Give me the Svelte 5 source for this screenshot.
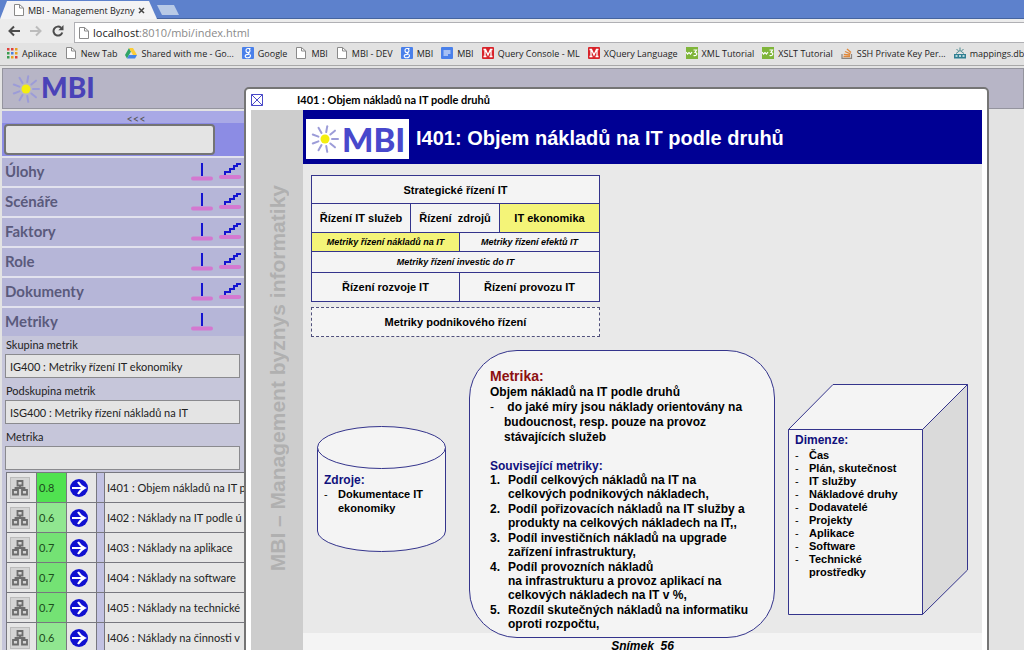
<script>
  const bookmarks = [
    { icon: 'apps', name: 'Aplikace' },
    { icon: 'page', name: 'New Tab' },
    { icon: 'drive', name: 'Shared with me - Go...' },
    { icon: 'google', name: 'Google' },
    { icon: 'page', name: 'MBI' },
    { icon: 'page', name: 'MBI - DEV' },
    { icon: 'google', name: 'MBI' },
    { icon: 'doc', name: 'MBI' },
    { icon: 'ml', name: 'Query Console - ML' },
    { icon: 'ml', name: 'XQuery Language' },
    { icon: 'w3', name: 'XML Tutorial' },
    { icon: 'w3', name: 'XSLT Tutorial' },
    { icon: 'stack', name: 'SSH Private Key Per...' },
    { icon: 'maps', name: 'mappings.db' },
  ];

  const menu = [
    { name: 'Úlohy', stairs: true },
    { name: 'Scénáře', stairs: true },
    { name: 'Faktory', stairs: true },
    { name: 'Role', stairs: true },
    { name: 'Dokumenty', stairs: true },
    { name: 'Metriky', stairs: false },
  ];

  const filters = $state([
    { id: 'group', label: 'Skupina metrik', value: 'IG400 : Metriky řízení IT ekonomiky' },
    { id: 'subgroup', label: 'Podskupina metrik', value: 'ISG400 : Metriky řízení nákladů na IT' },
    { id: 'metric', label: 'Metrika', value: '' },
  ]);

  const metrics = [
    { score: 0.8, name: 'I401 : Objem nákladů na IT p' },
    { score: 0.6, name: 'I402 : Náklady na IT podle ú' },
    { score: 0.7, name: 'I403 : Náklady na aplikace' },
    { score: 0.7, name: 'I404 : Náklady na software' },
    { score: 0.7, name: 'I405 : Náklady na technické' },
    { score: 0.6, name: 'I406 : Náklady na činnosti v' },
  ];

  const related = [
    'Podíl celkových nákladů na IT na\ncelkových podnikových nákladech,',
    'Podíl pořizovacích nákladů na IT služby a\nprodukty na celkových nákladech na IT,,',
    'Podíl investičních nákladů na upgrade\nzařízení infrastruktury,',
    'Podíl provozních nákladů\nna infrastrukturu a provoz aplikací na\ncelkových nákladech na IT v %,',
    'Rozdíl skutečných nákladů na informatiku\noproti rozpočtu,',
  ];

  const dimensions = [
    'Čas',
    'Plán, skutečnost',
    'IT služby',
    'Nákladové druhy',
    'Dodavatelé',
    'Projekty',
    'Aplikace',
    'Software',
    'Technické\nprostředky',
  ];

  const appColors = ['#e0403a', '#e0403a', '#e8a020', '#3a9c50', '#4a7fe0', '#e8a020', '#3a9c50', '#e8a020', '#e0403a'];
  const rays = [0, 40, 80, 120, 160, 200, 240, 280, 320];

  let search = $state('');
</script>

{#snippet pageIcon()}
  <svg width="12" height="12" viewBox="0 0 12 12" aria-hidden="true">
    <path d="M1.5.5h5l4 3.5v7.5h-9z" fill="#fff" stroke="#8a8a8a" />
    <path d="M6.5.5V4h4" fill="none" stroke="#8a8a8a" />
  </svg>
{/snippet}

{#snippet sun()}
  <svg class="sun" viewBox="0 0 30 32" aria-hidden="true">
    {#each rays as a}
      <path d="M22 16h6" stroke="#9c9cd8" stroke-width="2" stroke-linecap="round" transform={`rotate(${a} 15 16)`} />
    {/each}
    <circle cx="15" cy="16" r="4.5" fill="#f4ee10" />
  </svg>
{/snippet}

<div class="browser">
  <header class="chrome">
    <div class="tabs">
      <div class="tab">
        {@render pageIcon()}
        <span>MBI - Management Byzny</span>
        <button aria-label="Zavřít panel">
          <svg width="7" height="7" viewBox="0 0 7 7"><path d="M1 1l5 5M6 1l-5 5" stroke="#444" stroke-width="1.5" /></svg>
        </button>
      </div>
      <button class="newtab" aria-label="Nový panel"></button>
    </div>
    <div class="toolbar">
      <button aria-label="Zpět">
        <svg width="12" height="12" viewBox="0 0 12 12"><path d="M6 1.5L1.5 6 6 10.5M1.5 6H12" fill="none" stroke="#4c4c4c" stroke-width="2" /></svg>
      </button>
      <button aria-label="Vpřed">
        <svg width="12" height="12" viewBox="0 0 12 12"><path d="M6 1.5L10.5 6 6 10.5M10.5 6H0" fill="none" stroke="#bcbcbc" stroke-width="2" /></svg>
      </button>
      <button aria-label="Obnovit">
        <svg width="12" height="12" viewBox="0 0 12 12">
          <path d="M10.3 7.5A4.5 4.5 0 1 1 9 2.7" fill="none" stroke="#4c4c4c" stroke-width="2" />
          <path d="M11.5 0v5.2H6.3z" fill="#4c4c4c" />
        </svg>
      </button>
      <div class="address">
        {@render pageIcon()}
        <span><b>localhost</b>:8010/mbi/index.html</span>
      </div>
    </div>
    <nav class="bookmarks">
      {#each bookmarks as { icon, name }}
        <a href="#{icon}">
          {#if icon === 'page'}
            {@render pageIcon()}
          {:else}
            <svg width="12" height="12" viewBox="0 0 12 12" aria-hidden="true">
              {#if icon === 'apps'}
                {#each appColors as fill, i}
                  <rect x={(i % 3) * 4 + 1} y={Math.floor(i / 3) * 4 + 1} width="2.5" height="2.5" {fill} />
                {/each}
              {:else if icon === 'drive'}
                <path d="M4 1L0 8l2 3.5L6 4.5z" fill="#2fa566" />
                <path d="M4 1h4l4 7H8z" fill="#fbcd36" />
                <path d="M4 8h8l-2 3.5H2z" fill="#4384e8" />
              {:else if icon === 'google'}
                <rect width="12" height="12" rx="1" fill="#4a80ea" />
                <path d="M8.5 1.5H6a2 2 0 1 0 0 4c1.3 0 2-.8 2-2s-.6-1.5-1-2M6 5.5c-.8.7 2.5 1.5 2.5 3S7 10.8 5.6 10.8 3.2 10 3.2 9 4.5 7.4 6.8 7.4" fill="none" stroke="#fff" stroke-width="1.1" />
              {:else if icon === 'doc'}
                <rect width="12" height="12" rx="1" fill="#4a80ea" />
                <path d="M2.5 4h7M2.5 6h7M2.5 8h4.5" stroke="#fff" />
              {:else if icon === 'ml'}
                <rect width="12" height="12" rx="1" fill="#d8232a" />
                <path d="M1.5 9.5h3M3 9.5v-7M1.5 2.5h2L6 8l2.5-5.5h2M9 2.5v7M7.5 9.5h3" fill="none" stroke="#fff" stroke-width="1.3" />
              {:else if icon === 'w3'}
                <rect width="12" height="12" fill="#7fb53a" />
                <path d="M0 5l1.5 2L3 5.5 4.5 7 6 5M7.5 3h3L9 5.5c3 0 2 4-1.5 3" fill="none" stroke="#fff" stroke-width="1.2" />
              {:else if icon === 'stack'}
                <path d="M1 7v4.3h9.5V7" fill="none" stroke="#8a8580" stroke-width="1.2" />
                <path d="M2.5 9.5H9M2.8 7.4l6.2.6M4 4.5l5.5 2.3M6 2l4 3.6" stroke="#e0883a" stroke-width="1.3" />
              {:else}
                <path d="M0 11.5V7h12v4.5z" fill="#2f7f92" />
                <path d="M2 6.5l4-3 4 3M6 .5v3M2.5 2l2 2M9.5 2l-2 2" fill="none" stroke="#4d8a90" />
                <path d="M1.5 9h2M5 9h2M8.5 9h2" stroke="#e8f4f4" stroke-width="1.5" />
              {/if}
            </svg>
          {/if}
          <span>{name}</span>
        </a>
      {/each}
    </nav>
  </header>

  <div class="app">
    <div class="brand">{@render sun()}<span>MBI</span></div>

    <aside>
      <button class="collapse">&lt;&lt;&lt;</button>
      <div class="search">
        <input type="search" aria-label="Hledat" bind:value={search} />
      </div>
      <ul class="menu">
        {#each menu as { name, stairs }}
          <li>
            <a href="#{name}">{name}</a>
            <button aria-label="{name} - sbalit">
              <svg width="22" height="20" viewBox="0 0 22 20">
                <path d="M11 1v13" stroke="#1414d0" stroke-width="2" />
                <path d="M2 16.5h18" stroke="#d478d0" stroke-width="4" stroke-linecap="round" />
              </svg>
            </button>
            <button aria-label="{name} - rozbalit" class:hidden={!stairs}>
              <svg width="22" height="20" viewBox="0 0 22 20">
                <path d="M2 15h18" stroke="#d478d0" stroke-width="4" stroke-linecap="round" />
                <path d="M6 13V10h5V7h4V4h3V2h4" fill="none" stroke="#1414d0" stroke-width="2" />
              </svg>
            </button>
          </li>
        {/each}
      </ul>
      <form>
        {#each filters as f}
          <label for={f.id}>{f.label}</label>
          <input id={f.id} type="text" bind:value={f.value} />
        {/each}
      </form>
      <table>
        <tbody>
          {#each metrics as { score, name }}
            <tr>
              <td class="tree">
                <button aria-label="Strom">
                  <svg width="18" height="18" viewBox="0 0 18 18">
                    <path d="M6.5 2h5v4.5h-5zM2 11h5v4.5H2zM11 11h5v4.5h-5zM9 6.5V9M4.5 11V9h9v2" fill="none" stroke="#6c6c6c" stroke-width="1.8" />
                  </svg>
                </button>
              </td>
              <td class="score s{score * 10}">{score}</td>
              <td class="go">
                <button aria-label="Otevřít">
                  <svg width="18" height="18" viewBox="0 0 18 18">
                    <circle cx="9" cy="9" r="9" fill="#1010d0" />
                    <path d="M2 9h12M8 3q2.5 4 6.5 6-4 2-6.5 6" fill="none" stroke="#fff" stroke-width="2.2" />
                  </svg>
                </button>
              </td>
              <td class="gap"></td>
              <td class="name">{name}</td>
            </tr>
          {/each}
        </tbody>
      </table>
    </aside>

    <div class="dialog" role="dialog" aria-labelledby="dialog-title">
      <div class="titlebar">
        <button aria-label="Zavřít">
          <svg width="12" height="12" viewBox="0 0 12 12"><path d="M.5.5h11v11H.5zM.5.5l11 11M11.5.5l-11 11" fill="#fff" stroke="#4a4ac8" /></svg>
        </button>
        <h2 id="dialog-title">I401 : Objem nákladů na IT podle druhů</h2>
      </div>
      <div class="slide">
        <div class="strip"><span>MBI – Management byznys informatiky</span></div>
        <div class="content">
          <div class="banner">
            <div class="logo">{@render sun()}<span>MBI</span></div>
            <h1>I401: Objem nákladů na IT podle druhů</h1>
          </div>
          <div class="canvas">
            <div class="matrix">
              <div class="c4">Strategické řízení IT</div>
              <div>Řízení IT služeb</div>
              <div class="c2">Řízení&nbsp; zdrojů</div>
              <div class="on">IT ekonomika</div>
              <div class="c2 sub on">Metriky řízení nákladů na IT</div>
              <div class="c2 sub">Metriky řízení efektů IT</div>
              <div class="c4 sub">Metriky řízení investic do IT</div>
              <div class="c2">Řízení rozvoje IT</div>
              <div class="c2">Řízení provozu IT</div>
            </div>
            <div class="company">Metriky podnikového řízení</div>

            <div class="shapes">
              <section class="cylinder">
                <svg viewBox="0 0 129 126" preserveAspectRatio="none" aria-hidden="true">
                  <path d="M.5 21v84a64 20.5 0 0 0 128 0V21" fill="#f4f4f4" stroke="#34348c" />
                  <ellipse cx="64.5" cy="21.5" rx="64" ry="21" fill="#f4f4f4" stroke="#34348c" />
                </svg>
                <h3>Zdroje:</h3>
                <ul>
                  <li><i>-</i><span>{'Dokumentace IT\nekonomiky'}</span></li>
                </ul>
              </section>

              <section class="metric">
                <h2>Metrika:</h2>
                <p>Objem nákladů na IT podle druhů</p>
                <ul>
                  <li><i>-</i><span>{'\u00a0do jaké míry jsou náklady orientovány na\nbudoucnost, resp. pouze na provoz\nstávajících služeb'}</span></li>
                </ul>
                <h3>Související metriky:</h3>
                <ol>
                  {#each related as text, i}
                    <li><b>{i + 1}.</b><span>{text}</span></li>
                  {/each}
                </ol>
              </section>

              <section class="cube">
                <svg viewBox="0 0 180 231" preserveAspectRatio="none" aria-hidden="true">
                  <path d="M.5 45.5L45 .5h134.5l-45 45z" fill="#f4f4f4" stroke="#34348c" />
                  <path d="M134.5 45.5l45-45V186l-45 44.5z" fill="#dadada" stroke="#34348c" />
                  <path d="M.5 45.5h134v185H.5z" fill="#f4f4f4" stroke="#34348c" />
                </svg>
                <h3>Dimenze:</h3>
                <ul>
                  {#each dimensions as text}
                    <li><i>-</i><span>{text}</span></li>
                  {/each}
                </ul>
              </section>
            </div>
          </div>
          <footer>Snímek&nbsp; 56</footer>
        </div>
      </div>
    </div>
  </div>
</div>

<style>
  :global(body) {
    background: #e3e3e3;
  }
  .browser {
    height: 100vh;
    display: flex;
    flex-direction: column;
    overflow: hidden;
    color: #222;
    font-family: Lato, 'Liberation Sans', sans-serif;
    font-size: 11px;
  }
  .browser :is(h1, h2, h3, p, ul, ol) {
    margin: 0;
    padding: 0;
    list-style: none;
  }
  button {
    display: flex;
    align-items: center;
    justify-content: center;
    padding: 0;
    border: none;
    background: none;
  }
  input {
    box-sizing: border-box;
    font: inherit;
    color: inherit;
  }
  svg {
    display: block;
    flex: none;
  }
  a {
    color: inherit;
    text-decoration: none;
  }

  /* browser window */
  .chrome {
    flex: none;
    font-family: 'Open Sans', 'Noto Sans', sans-serif;
    font-size: 9px;
    background: #e2e2e2;
    border-bottom: 1px solid #a8a8a8;
  }
  .tabs {
    display: flex;
    align-items: end;
    height: 18px;
    background: #5d81cc;
    border-bottom: 1px solid #45649f;
  }
  .tab {
    display: flex;
    align-items: center;
    box-sizing: border-box;
    width: 157px;
    height: 18px;
    padding: 0 12px 0 13px;
    gap: 3px;
    margin-bottom: -1px;
    background: #f3f3f5;
    clip-path: polygon(0 100%, 7px 0, 149px 0, 100% 100%);
  }
  .tab span {
    flex: 1;
    white-space: nowrap;
  }
  .newtab {
    width: 22px;
    height: 10px;
    margin-bottom: 3px;
    background: #b8cae6;
    clip-path: polygon(0 0, 17px 0, 100% 100%, 5px 100%);
  }
  .toolbar {
    display: flex;
    align-items: center;
    height: 24px;
    padding-left: 8px;
    gap: 10px;
    background: #ececec;
  }
  .address {
    flex: 1;
    display: flex;
    align-items: center;
    align-self: end;
    height: 19px;
    padding-left: 3px;
    gap: 3px;
    border: 1px solid #b0b0b4;
    border-right: none;
    background: #fff;
    color: #8a8a8a;
    font-size: 11px;
  }
  .address b {
    font-weight: 400;
    color: #222;
  }
  .bookmarks {
    display: flex;
    align-items: center;
    height: 20px;
    padding: 0 0 2px 6px;
    gap: 8px;
    overflow: hidden;
  }
  .bookmarks a {
    display: flex;
    align-items: center;
    flex: none;
    gap: 4px;
    white-space: nowrap;
  }

  /* page */
  .app {
    flex: 1;
    position: relative;
    padding: 2px 0 0 2px;
    min-height: 0;
  }
  .brand {
    display: flex;
    align-items: center;
    height: 39px;
    padding-left: 8px;
    border: 1px solid #94949e;
    background: #b7b5c6;
    color: #4a42b8;
    font-size: 28px;
    font-weight: 900;
    line-height: 34px;
  }
  .brand span {
    padding-bottom: 3px;
  }
  .sun {
    width: 30px;
    height: 32px;
  }
  aside {
    width: 244px;
    margin-top: 2px;
    background: #c6c6da;
  }
  .collapse {
    width: 100%;
    height: 12px;
    padding: 3px 0 0 24px;
    background: #a9a9e6;
    color: #555;
    font: inherit;
  }
  .search {
    height: 33px;
    padding: 1px 2px;
    box-sizing: border-box;
    background: #8c8ce4;
  }
  .search input {
    display: block;
    width: 211px;
    height: 31px;
    border: 2px solid #747474;
    border-radius: 4px;
    background: #e4e4e4;
    appearance: none;
  }
  .menu li {
    display: flex;
    align-items: center;
    height: 28px;
    padding: 0 5px 0 3px;
    gap: 6px;
    border-top: 2px solid #e2e2ee;
    background: #b6b6d8;
  }
  .menu a {
    flex: 1;
    color: #5a5a7c;
    font-size: 15px;
    font-weight: 700;
    line-height: 20px;
    padding-bottom: 2px;
  }
  .hidden {
    visibility: hidden;
  }
  form {
    padding: 0 6px 0 3px;
  }
  form label {
    display: block;
    line-height: 18px;
    padding: 0 1px;
  }
  form input {
    display: block;
    width: 100%;
    height: 24px;
    margin-bottom: 4px;
    padding: 0 4px;
    border: 1px solid #8a8a8e;
    border-radius: 0;
    background: #e4e4e4;
  }
  table {
    width: 240px;
    margin: -2px 0 0 4px;
    table-layout: fixed;
    border-collapse: collapse;
  }
  td {
    height: 29px;
    padding: 0;
    border: 1px solid #77777f;
    background: #e6e6e6;
  }
  .tree,
  .score,
  .go {
    width: 29px;
  }
  .tree button {
    width: 20px;
    height: 22px;
    margin-left: 3px;
    background: #d4d4d4;
    border: 1px solid #bcbcbc;
  }
  .go button {
    margin-left: 3px;
  }
  .score {
    padding-left: 2px;
    width: 27px;
    color: #1c4c1c;
  }
  .s8 {
    background: #50e250;
  }
  .s7 {
    background: #74e274;
  }
  .s6 {
    background: #90e690;
  }
  .gap {
    width: 7px;
    background: #c2c2e2;
  }
  .name {
    padding-left: 2px;
    white-space: nowrap;
  }

  /* dialog */
  .dialog {
    position: absolute;
    top: 21px;
    left: 244px;
    right: 35px;
    bottom: -40px;
    padding: 0 5px;
    border: 2px solid #757575;
    border-radius: 5px;
    background: #fff;
    color: #000;
    overflow: hidden;
  }
  .titlebar {
    display: flex;
    align-items: center;
    height: 21px;
    gap: 34px;
  }
  .titlebar h2 {
    font-size: 11px;
    font-weight: 700;
  }
  .slide {
    display: flex;
    font-family: 'Liberation Sans', Arial, sans-serif;
    font-size: 12px;
    font-weight: 700;
  }
  .strip {
    flex: none;
    width: 52px;
    box-sizing: border-box;
    padding: 75px 0 0 15px;
    background: #cdcdcd;
    color: #b0b0b0;
    font-size: 21px;
    line-height: 24px;
  }
  .strip span {
    display: block;
    writing-mode: vertical-rl;
    transform: rotate(180deg);
    white-space: nowrap;
  }
  .content {
    flex: 1;
    background: #f4f4f4;
  }
  .banner {
    display: flex;
    align-items: center;
    height: 54px;
    padding-left: 3px;
    gap: 7px;
    background: #000094;
    color: #fff;
  }
  .banner h1 {
    font-size: 20px;
    line-height: 24px;
    padding-top: 2px;
  }
  .logo {
    display: flex;
    align-items: center;
    box-sizing: border-box;
    width: 103px;
    height: 40px;
    margin-top: 4px;
    padding-left: 4px;
    gap: 2px;
    background: #fff;
    color: #4848cc;
    font: 900 33px Lato, sans-serif;
  }
  .canvas {
    display: flow-root;
    padding: 11px 8px 0;
    background: #e9e9e9;
  }
  .matrix,
  .company {
    font-size: 11px;
  }
  .matrix {
    display: grid;
    grid-template-columns: 99fr 49fr 40fr 100fr;
    grid-template-rows: 28px 29px 19px 21px 29px;
    width: 288px;
    border: solid #34348c;
    border-width: 1px 0 0 1px;
  }
  .matrix div {
    display: flex;
    align-items: center;
    justify-content: center;
    border: solid #34348c;
    border-width: 0 1px 1px 0;
    background: #f4f4f4;
    white-space: nowrap;
  }
  .matrix .c2 {
    grid-column: span 2;
  }
  .matrix .c4 {
    grid-column: span 4;
  }
  .matrix .on {
    background: #f4f478;
  }
  .matrix .sub {
    font-size: 9px;
    font-style: italic;
  }
  .company {
    display: flex;
    align-items: center;
    justify-content: center;
    width: 287px;
    height: 28px;
    margin-top: 5px;
    border: 1px dashed #50507c;
    background: #f4f4f4;
  }
  .shapes {
    display: flex;
    align-items: start;
    padding: 13px 6px 0;
    margin-bottom: -5px;
  }
  .shapes section {
    position: relative;
    box-sizing: border-box;
    min-width: 0;
  }
  .shapes section > :not(svg) {
    position: relative;
  }
  .shapes svg {
    position: absolute;
    inset: 0;
    width: 100%;
    height: 100%;
  }
  .shapes h3 {
    color: #10107c;
    font-size: 12px;
    line-height: 14px;
  }
  .shapes li {
    display: flex;
    white-space: pre;
  }
  .shapes i {
    width: 14px;
    font-style: normal;
    font-weight: 400;
  }
  .cylinder {
    flex: 129 1 129px;
    height: 126px;
    margin-top: 76px;
    padding: 47px 7px 0;
    font-size: 11px;
    line-height: 14px;
  }
  .metric {
    flex: 306 1 306px;
    margin: 0 13px 0 23px;
    padding: 17px 20px 6px;
    border: 1px solid #34348c;
    border-radius: 48px;
    background: #f4f4f4;
    line-height: 15px;
  }
  .metric h2 {
    color: #8c1010;
    font-size: 14px;
    line-height: 17px;
  }
  .metric h3 {
    margin-top: 14px;
  }
  .metric ol {
    display: grid;
    gap: 1px;
    line-height: 14px;
  }
  .metric b {
    width: 18px;
  }
  .cube {
    flex: 180 1 180px;
    height: 231px;
    margin-top: 34px;
    padding: 49px 7px 0;
    font-size: 11px;
    line-height: 13px;
  }
  .cube h3 {
    margin-bottom: 2px;
  }
  footer {
    padding-top: 6px;
    line-height: 14px;
    text-align: center;
    font-style: italic;
  }
</style>
